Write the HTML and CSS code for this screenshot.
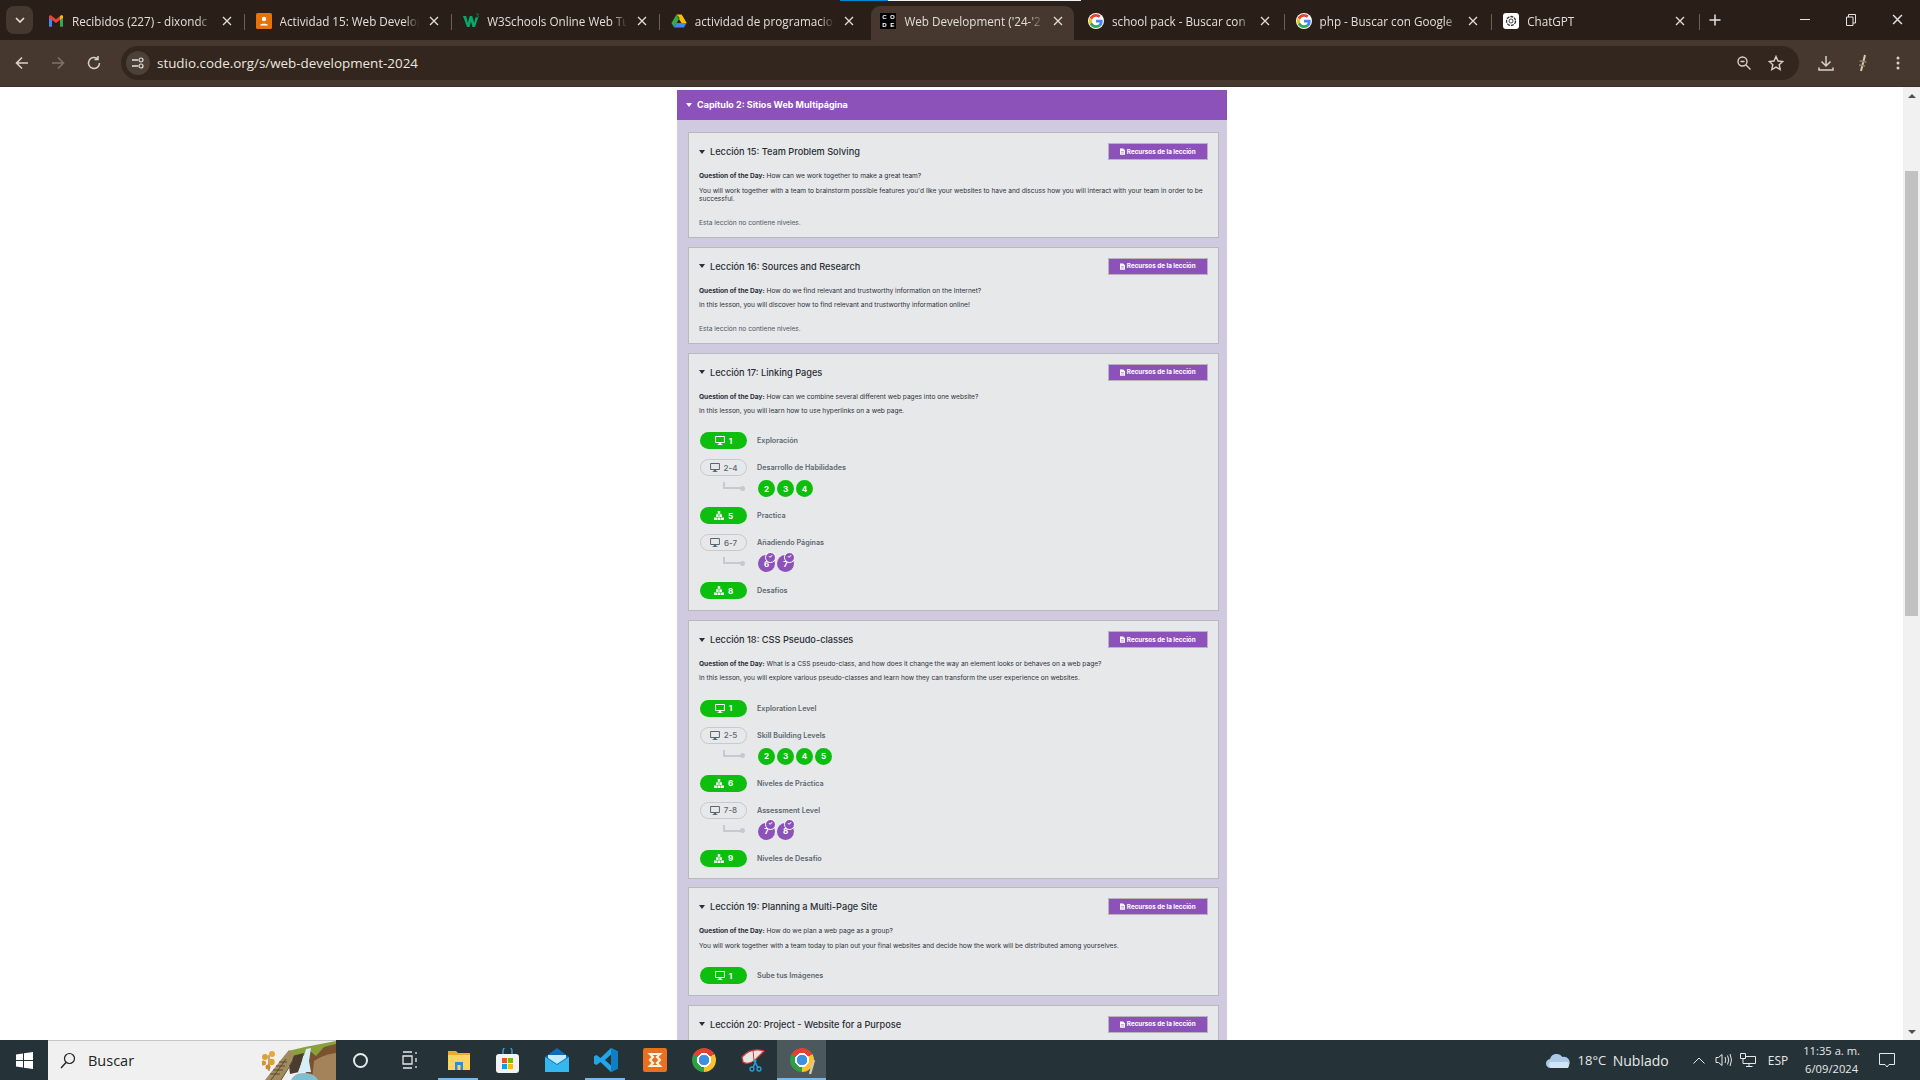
FILE: index.html
```html
<!DOCTYPE html>
<html lang="es">
<head>
    <meta charset="UTF-8">
    <meta name="viewport" content="width=device-width, initial-scale=1.0">
    <title>Web Development ('24-'25)</title>
    <link rel="stylesheet" href="styles.css">
</head>
<body>
    <svg class="sprites" width="0" height="0">
        <symbol id="ic-desktop" viewBox="0 0 12 11"><path d="M0 1a1 1 0 0 1 1-1h10a1 1 0 0 1 1 1v6.500a1 1 0 0 1-1 1H7.500V10H9v1H3v-1h1.500V8.500H1a1 1 0 0 1-1-1zm1.200.2v6h9.600v-6z" fill="currentColor" fill-rule="evenodd"/></symbol>
        <symbol id="ic-blocks" viewBox="0 0 12 11"><path d="M4.500 0h3v3.300h-3zM2.500 4h3v3.300h-3zM6.500 4h3v3.300h-3zM0 8h3.600v3H0zM4.200 8h3.600v3H4.200zM8.400 8H12v3H8.400z" fill="currentColor"/></symbol>
        <symbol id="ic-file" viewBox="0 0 8 10"><path d="M0 0h5l3 3v7H0zM1.500 5v.8h5V5zm0 2v.8h5V7z" fill="currentColor" fill-rule="evenodd"/></symbol>
        <symbol id="ic-x" viewBox="0 0 10 10"><path d="M1 1l8 8M9 1L1 9" stroke="currentColor" stroke-width="1.300" fill="none"/></symbol>
        <symbol id="ic-g" viewBox="0 0 48 48">
            <path fill="#EA4335" d="M24 9.500c3.540 0 6.710 1.220 9.210 3.600l6.850-6.850C35.900 2.380 30.470 0 24 0 14.620 0 6.510 5.380 2.560 13.220l7.980 6.190C12.430 13.720 17.740 9.500 24 9.500z"/>
            <path fill="#4285F4" d="M46.980 24.550c0-1.570-.15-3.090-.38-4.550H24v9.020h12.940c-.58 2.960-2.260 5.480-4.780 7.180l7.730 6c4.510-4.180 7.090-10.360 7.090-17.650z"/>
            <path fill="#FBBC05" d="M10.530 28.590c-.48-1.450-.76-2.990-.76-4.590s.27-3.140.76-4.590l-7.980-6.190C.92 16.460 0 20.120 0 24c0 3.880.92 7.540 2.560 10.780l7.970-6.190z"/>
            <path fill="#34A853" d="M24 48c6.480 0 11.930-2.130 15.890-5.810l-7.730-6c-2.150 1.450-4.920 2.300-8.160 2.300-6.260 0-11.570-4.220-13.470-9.910l-7.980 6.190C6.510 42.620 14.620 48 24 48z"/>
        </symbol>
    </svg>

    <div class="load-line"><span class="load-blue"></span><span class="load-white"></span></div>

    <!-- pestañas -->
    <div class="tabstrip">
        <button class="tab-search"><svg width="10" height="6" viewBox="0 0 10 6"><path d="M1 1l4 4 4-4" stroke="#e8e2dc" stroke-width="1.600" fill="none"/></svg></button>
        <div class="tab">
            <svg class="tab-icon" viewBox="0 0 16 16"><path d="M1 3v10.500h3V7l4 3 4-3v6.500h3V3l-1.500-1L8 6.300 2.500 2z" fill="#ea4335"/><path d="M1 5v8.500h3V7z" fill="#4285f4"/><path d="M15 5v8.500h-3V7z" fill="#34a853"/><path d="M12 3.300V7l3-2.200V3l-1.500-1z" fill="#fbbc05"/></svg>
            <span class="tab-title">Recibidos (227) - dixondc</span>
            <svg class="tab-close"><use href="#ic-x"/></svg>
        </div>
        <div class="tab">
            <svg class="tab-icon" viewBox="0 0 16 16"><rect width="16" height="16" rx="1.500" fill="#e8710a"/><circle cx="8" cy="6" r="2.200" fill="#fff"/><path d="M4 12.500c0-2.500 8-2.500 8 0z" fill="#fff"/></svg>
            <span class="tab-title">Actividad 15: Web Develop</span>
            <svg class="tab-close"><use href="#ic-x"/></svg>
        </div>
        <div class="tab">
            <svg class="tab-icon" viewBox="0 0 16 16"><path d="M0 3h3.200l1.600 7 2-7h2.400l2 7 1.200-5.500h2.800L12 14H9.500L8 8.500 6.500 14H4z" fill="#04aa6d"/><path d="M13 1h2.500v.6l-1 1c.8.200 1 .6 1 1 0 .8-1.600 1-2.500.6" stroke="#04aa6d" stroke-width=".6" fill="none"/></svg>
            <span class="tab-title">W3Schools Online Web Tu</span>
            <svg class="tab-close"><use href="#ic-x"/></svg>
        </div>
        <div class="tab">
            <svg class="tab-icon" viewBox="0 0 16 16"><path d="M5.500 1.500h5L15.500 10l-2.500 0z" fill="#fbbc05"/><path d="M5.500 1.500L.5 10 3 14.500 8 6z" fill="#34a853"/><path d="M5.500 10h10L13 14.500H3z" fill="#4285f4"/><path d="M10.500 1.500L15.500 10h-5L8 6z" fill="#fbbc05"/></svg>
            <span class="tab-title">actividad de programacion</span>
            <svg class="tab-close"><use href="#ic-x"/></svg>
        </div>
        <div class="tab active">
            <span class="tab-icon code-logo"><i>C</i><i>O</i><i>D</i><i>E</i></span>
            <span class="tab-title">Web Development ('24-'2</span>
            <svg class="tab-close"><use href="#ic-x"/></svg>
        </div>
        <div class="tab">
            <span class="tab-icon g-badge"><svg width="14" height="14"><use href="#ic-g"/></svg></span>
            <span class="tab-title">school pack - Buscar con</span>
            <svg class="tab-close"><use href="#ic-x"/></svg>
        </div>
        <div class="tab">
            <span class="tab-icon g-badge"><svg width="14" height="14"><use href="#ic-g"/></svg></span>
            <span class="tab-title">php - Buscar con Google</span>
            <svg class="tab-close"><use href="#ic-x"/></svg>
        </div>
        <div class="tab">
            <span class="tab-icon gpt-badge"><svg width="12" height="12" viewBox="0 0 12 12"><circle cx="6" cy="6" r="4.500" fill="none" stroke="#333" stroke-width="1.300" stroke-dasharray="3 1"/><circle cx="6" cy="6" r="2" fill="none" stroke="#333" stroke-width=".9"/></svg></span>
            <span class="tab-title">ChatGPT</span>
            <svg class="tab-close"><use href="#ic-x"/></svg>
        </div>
        <svg class="new-tab" width="12" height="12" viewBox="0 0 12 12"><path d="M6 .5v11M.5 6h11" stroke="#e8e2dc" stroke-width="1.500"/></svg>
        <div class="win-buttons">
            <svg width="10" height="10" viewBox="0 0 10 10"><path d="M0 5.500h10" stroke="#e8e2dc"/></svg>
            <svg width="10" height="12" viewBox="0 0 10 12"><path d="M.5 3h6.500v8.500H.5zM2.500 3V.5h7V9H7" stroke="#e8e2dc" fill="none"/></svg>
            <svg class="win-close" width="11" height="11"><use href="#ic-x"/></svg>
        </div>
    </div>

    <!-- barra de direcciones -->
    <div class="toolbar">
        <svg class="nav-icon" viewBox="0 0 16 16"><path d="M14 8H2.500M8 2.500L2.500 8 8 13.500" stroke="#d8d1ca" stroke-width="1.600" fill="none"/></svg>
        <svg class="nav-icon" viewBox="0 0 16 16"><path d="M2 8h11.500M8 2.500L13.500 8 8 13.500" stroke="#7d7269" stroke-width="1.600" fill="none"/></svg>
        <svg class="nav-icon" viewBox="0 0 16 16"><path d="M13.500 8A5.500 5.500 0 1 1 11.700 3.900M12 1v3.500H8.500" stroke="#d8d1ca" stroke-width="1.500" fill="none"/></svg>
        <div class="omnibox">
            <span class="site-info"><svg width="14" height="12" viewBox="0 0 14 12"><path d="M1 3h6M1 9h6" stroke="#e8e2dc" stroke-width="1.300"/><circle cx="10" cy="3" r="2" fill="none" stroke="#e8e2dc" stroke-width="1.200"/><circle cx="10" cy="9" r="2" fill="none" stroke="#e8e2dc" stroke-width="1.200"/></svg></span>
            <span class="url">studio.code.org/s/web-development-2024</span>
            <svg class="omni-zoom" width="16" height="16" viewBox="0 0 16 16"><circle cx="6.500" cy="6.500" r="4.500" fill="none" stroke="#d8d1ca" stroke-width="1.400"/><path d="M10 10l4.500 4.500M4.500 6.500h4" stroke="#d8d1ca" stroke-width="1.400"/></svg>
            <svg class="omni-star" width="16" height="16" viewBox="0 0 16 16"><path d="M8 1.500l2 4.500 4.800.5-3.600 3.200 1 4.800L8 12.100l-4.200 2.400 1-4.800L1.200 6.500 6 6z" fill="none" stroke="#d8d1ca" stroke-width="1.400"/></svg>
        </div>
        <svg class="tool-download" width="16" height="16" viewBox="0 0 16 16"><path d="M8 1v9.500M3.500 6.500L8 11l4.500-4.500M1 12.500v2.500h14v-2.500" stroke="#d8d1ca" stroke-width="1.500" fill="none"/></svg>
        <svg class="tool-ext" width="12" height="18" viewBox="0 0 12 18"><path d="M8 1L4 17" stroke="#d8c9a8" stroke-width="2"/><path d="M2.500 7l7 1M2 11l6 1" stroke="#8a7f74" stroke-width="1.300"/></svg>
        <svg class="tool-menu" width="4" height="14" viewBox="0 0 4 14"><circle cx="2" cy="2" r="1.500" fill="#d8d1ca"/><circle cx="2" cy="7" r="1.500" fill="#d8d1ca"/><circle cx="2" cy="12" r="1.500" fill="#d8d1ca"/></svg>
    </div>

    <!-- contenido -->
    <div class="viewport">
        <div class="page">
            <div class="chapter">
                <div class="chapter-head"><i class="caret"></i>Capítulo 2: Sitios Web Multipágina</div>
                <div class="chapter-body">

                    <div class="lesson">
                        <div class="lesson-head">
                            <h2><i class="caret dark"></i>Lección 15: Team Problem Solving</h2>
                            <a class="res-btn" href="#"><svg width="5" height="7"><use href="#ic-file"/></svg>Recursos de la lección</a>
                        </div>
                        <p class="lesson-text"><b>Question of the Day:</b> How can we work together to make a great team?</p>
                        <p class="lesson-text">You will work together with a team to brainstorm possible features you'd like your websites to have and discuss how you will interact with your team in order to be successful.</p>
                        <p class="no-levels">Esta lección no contiene niveles.</p>
                    </div>

                    <div class="lesson">
                        <div class="lesson-head">
                            <h2><i class="caret dark"></i>Lección 16: Sources and Research</h2>
                            <a class="res-btn" href="#"><svg width="5" height="7"><use href="#ic-file"/></svg>Recursos de la lección</a>
                        </div>
                        <p class="lesson-text"><b>Question of the Day:</b> How do we find relevant and trustworthy information on the Internet?</p>
                        <p class="lesson-text">In this lesson, you will discover how to find relevant and trustworthy information online!</p>
                        <p class="no-levels">Esta lección no contiene niveles.</p>
                    </div>

                    <div class="lesson">
                        <div class="lesson-head">
                            <h2><i class="caret dark"></i>Lección 17: Linking Pages</h2>
                            <a class="res-btn" href="#"><svg width="5" height="7"><use href="#ic-file"/></svg>Recursos de la lección</a>
                        </div>
                        <p class="lesson-text"><b>Question of the Day:</b> How can we combine several different web pages into one website?</p>
                        <p class="lesson-text">In this lesson, you will learn how to use hyperlinks on a web page.</p>
                        <div class="levels">
                            <div class="level-row"><span class="pill"><svg><use href="#ic-desktop"/></svg>1</span><span class="level-label">Exploración</span></div>
                            <div class="level-row"><span class="pill outline"><svg><use href="#ic-desktop"/></svg>2-4</span><span class="level-label">Desarrollo de Habilidades</span></div>
                            <div class="bubble-row"><i class="connector"></i><span class="bubble">2</span><span class="bubble">3</span><span class="bubble">4</span></div>
                            <div class="level-row"><span class="pill"><svg><use href="#ic-blocks"/></svg>5</span><span class="level-label">Practica</span></div>
                            <div class="level-row"><span class="pill outline"><svg><use href="#ic-desktop"/></svg>6-7</span><span class="level-label">Añadiendo Páginas</span></div>
                            <div class="bubble-row"><i class="connector"></i><span class="bubble quiz">6</span><span class="bubble quiz">7</span></div>
                            <div class="level-row"><span class="pill"><svg><use href="#ic-blocks"/></svg>8</span><span class="level-label">Desafíos</span></div>
                        </div>
                    </div>

                    <div class="lesson">
                        <div class="lesson-head">
                            <h2><i class="caret dark"></i>Lección 18: CSS Pseudo-classes</h2>
                            <a class="res-btn" href="#"><svg width="5" height="7"><use href="#ic-file"/></svg>Recursos de la lección</a>
                        </div>
                        <p class="lesson-text"><b>Question of the Day:</b> What is a CSS pseudo-class, and how does it change the way an element looks or behaves on a web page?</p>
                        <p class="lesson-text">In this lesson, you will explore various pseudo-classes and learn how they can transform the user experience on websites.</p>
                        <div class="levels">
                            <div class="level-row"><span class="pill"><svg><use href="#ic-desktop"/></svg>1</span><span class="level-label">Exploration Level</span></div>
                            <div class="level-row"><span class="pill outline"><svg><use href="#ic-desktop"/></svg>2-5</span><span class="level-label">Skill Building Levels</span></div>
                            <div class="bubble-row"><i class="connector"></i><span class="bubble">2</span><span class="bubble">3</span><span class="bubble">4</span><span class="bubble">5</span></div>
                            <div class="level-row"><span class="pill"><svg><use href="#ic-blocks"/></svg>6</span><span class="level-label">Niveles de Práctica</span></div>
                            <div class="level-row"><span class="pill outline"><svg><use href="#ic-desktop"/></svg>7-8</span><span class="level-label">Assessment Level</span></div>
                            <div class="bubble-row"><i class="connector"></i><span class="bubble quiz">7</span><span class="bubble quiz">8</span></div>
                            <div class="level-row"><span class="pill"><svg><use href="#ic-blocks"/></svg>9</span><span class="level-label">Niveles de Desafío</span></div>
                        </div>
                    </div>

                    <div class="lesson">
                        <div class="lesson-head">
                            <h2><i class="caret dark"></i>Lección 19: Planning a Multi-Page Site</h2>
                            <a class="res-btn" href="#"><svg width="5" height="7"><use href="#ic-file"/></svg>Recursos de la lección</a>
                        </div>
                        <p class="lesson-text"><b>Question of the Day:</b> How do we plan a web page as a group?</p>
                        <p class="lesson-text">You will work together with a team today to plan out your final websites and decide how the work will be distributed among yourselves.</p>
                        <div class="levels">
                            <div class="level-row"><span class="pill"><svg><use href="#ic-desktop"/></svg>1</span><span class="level-label">Sube tus Imágenes</span></div>
                        </div>
                    </div>

                    <div class="lesson last">
                        <div class="lesson-head">
                            <h2><i class="caret dark"></i>Lección 20: Project - Website for a Purpose</h2>
                            <a class="res-btn" href="#"><svg width="5" height="7"><use href="#ic-file"/></svg>Recursos de la lección</a>
                        </div>
                    </div>

                </div>
            </div>
        </div>
        <div class="scrollbar">
            <i class="scroll-up"></i>
            <div class="scroll-track"><div class="scroll-thumb"></div></div>
            <i class="scroll-down"></i>
        </div>
    </div>

    <!-- barra de tareas -->
    <div class="taskbar">
        <span class="start"><svg width="17" height="17" viewBox="0 0 17 17"><path d="M0 2.400L7 1.400V8H0zM8 1.200L17 0v8H8zM0 9h7v6.600L0 14.600zM8 9h9v8L8 15.800z" fill="#fff"/></svg></span>
        <div class="search-box">
            <svg width="16" height="17" viewBox="0 0 16 17"><circle cx="9.500" cy="6.500" r="5" fill="none" stroke="#222" stroke-width="1.200"/><path d="M6 10.500L1 16" stroke="#222" stroke-width="1.400"/></svg>
            <span class="search-text">Buscar</span>
            <svg class="search-art" width="74" height="39" viewBox="0 0 74 39">
                <path d="M43 7L74 1V39H44z" fill="#7a5230"/>
                <path d="M52 20Q60 14 74 12V39H50z" fill="#a5835a"/>
                <path d="M26 10L43 6 74 0V3L62 6 54 15 48 10 40 16 30 18z" fill="#8aa03c"/>
                <path d="M26 16L42 12 37 31 28 33z" fill="#4a3c2e"/>
                <path d="M44 8L49 7 47 20 49 31H36L41 18z" fill="#d6eef5"/>
                <path d="M29 39Q33 31 43 32 52 32 56 39z" fill="#7fbfd0"/>
                <path d="M3 39L22 15 27 9 32 14 30 20 19 39z" fill="#a08a5e"/>
                <path d="M9 39L24 18 M19 39L31 20 M8 33h10M11 29h10M14 25h9M17 21h8" stroke="#5c4a30" stroke-width="1" fill="none"/>
                <path d="M7 14V30" stroke="#8a5a20" stroke-width="1"/>
                <circle cx="3" cy="16" r="3" fill="#e0a030"/>
                <circle cx="10" cy="13" r="3" fill="#e8a838"/>
                <circle cx="1.500" cy="22" r="2.500" fill="#d8942c"/>
                <circle cx="9.500" cy="21" r="3.200" fill="#e0a030"/>
                <circle cx="6" cy="26" r="2.500" fill="#c88a2a"/>
            </svg>
        </div>
        <span class="task-item"><i class="cortana"></i></span>
        <span class="task-item"><svg width="16" height="18" viewBox="0 0 16 18"><path d="M1 1h9M1 17h9M1 5h9v8H1zM14 1v2M14 7v4M14 15v2" stroke="#e6e9ea" stroke-width="1.300" fill="none"/></svg></span>
        <span class="task-item running"><svg width="22" height="20" viewBox="0 0 22 20"><path d="M0 1h8l2 2h12v5H0z" fill="#f0a92e"/><path d="M0 5h22v15H0z" fill="#fcd462"/><path d="M7 12h8v8H7z" fill="#2a8fd6"/><path d="M9.500 15h3v5h-3z" fill="#fcd462"/></svg></span>
        <span class="task-item"><svg width="23" height="25" viewBox="0 0 23 25"><path d="M7 7V3a4 4 0 0 1 9 0v4" fill="none" stroke="#2aa0e0" stroke-width="1.500"/><rect y="6" width="23" height="19" rx="3" fill="#f3f3f3"/><path d="M6 10h5v5H6z" fill="#f25022"/><path d="M12 10h5v5h-5z" fill="#7fba00"/><path d="M6 16h5v5H6z" fill="#00a4ef"/><path d="M12 16h5v5h-5z" fill="#ffb900"/></svg></span>
        <span class="task-item"><svg width="24" height="24" viewBox="0 0 24 24"><path d="M0 9L12 0l12 9v15H0z" fill="#0f6cbd"/><path d="M0 9l12 8 12-8v15H0z" fill="#35b8f0"/><path d="M3 7h18v3l-9 6-9-6z" fill="#c5ecfb"/></svg></span>
        <span class="task-item running"><svg width="24" height="24" viewBox="0 0 24 24"><path d="M17 0l7 3.400v17.200L17 24 6.500 14l-4 3L0 15.800v-7.600L2.500 7l4 3z" fill="#23a6e8"/><path d="M17 6.500L11 12l6 5.500z" fill="#253237"/><path d="M17 0l7 3.400v17.200L17 24z" fill="#0f7fc4"/></svg></span>
        <span class="task-item"><svg width="24" height="24" viewBox="0 0 24 24"><rect width="24" height="24" rx="2" fill="#e8701f"/><path d="M7 6h10l-3 3 3 3-3 3 3 3H7l3-3-3-3 3-3z" fill="none" stroke="#fff3e3" stroke-width="2.200"/></svg></span>
        <span class="task-item"><i class="chrome-ic"></i></span>
        <span class="task-item"><svg width="24" height="24" viewBox="0 0 24 24"><path d="M1 9Q10-1 23 3L13 13Q6 17 2 14z" fill="#e6e6e6" stroke="#d43a3a" stroke-width="1.300"/><path d="M12 2l1 11" stroke="#d43a3a" stroke-width="1"/><path d="M13 12l4 8M15 12l-3 8" stroke="#2a9fd6" stroke-width="1.600"/><circle cx="18" cy="21" r="2" fill="none" stroke="#2a9fd6" stroke-width="1.300"/><circle cx="11" cy="21" r="2" fill="none" stroke="#2a9fd6" stroke-width="1.300"/></svg></span>
        <span class="task-item running active"><i class="chrome-ic"></i><svg class="chrome-pen" width="8" height="14" viewBox="0 0 8 14"><path d="M6 0L2 14" stroke="#d8c9a8" stroke-width="2.400"/></svg></span>

        <div class="tray">
            <svg class="tray-cloud" width="24" height="15" viewBox="0 0 24 15"><path d="M5 15a4.500 4.500 0 0 1-1-9A7 7 0 0 1 16.500 4 5.500 5.500 0 0 1 19.500 15z" fill="#a9c9e8"/><path d="M5 15a4.500 4.500 0 0 1-1-6h18q2 3 0 6z" fill="#d3e4f3"/></svg>
            <span class="tray-temp">18°C</span>
            <span class="tray-cond">Nublado</span>
            <svg class="tray-up" width="12" height="7" viewBox="0 0 12 7"><path d="M.5 6.500L6 1l5.500 5.500" stroke="#e6e9ea" fill="none"/></svg>
            <svg class="tray-vol" width="17" height="14" viewBox="0 0 17 14"><path d="M1 4.500h2.500L7 1.500v11l-3.500-3H1zM10 4q1.500 3 0 6M12.500 2.500q2.500 4.500 0 9M15 1q3 6 0 12" stroke="#e6e9ea" fill="none"/></svg>
            <svg class="tray-net" width="16" height="14" viewBox="0 0 16 14"><path d="M3 3.500H15.500v7H3zM9 10.500V13M6 13.500h6.500" stroke="#e6e9ea" fill="none"/><path d="M.5.500h5v5h-5z" fill="#253237" stroke="#e6e9ea"/></svg>
            <span class="tray-lang">ESP</span>
            <div class="clock"><span>11:35 a. m.</span><span>6/09/2024</span></div>
            <svg class="tray-note" width="16" height="15" viewBox="0 0 16 15"><path d="M.5.500h15v11H10l-2 2.500-2-2.500H.5z" stroke="#e6e9ea" fill="none"/></svg>
        </div>
    </div>
</body>
</html>
```

FILE: styles.css
```css
* {
    box-sizing: border-box;
}

body {
    margin: 0;
    height: 100vh;
    overflow: hidden;
    display: flex;
    flex-direction: column;
    position: relative;
    font-family: Inter, "Liberation Sans", sans-serif;
    background-color: #fff;
}

.sprites {
    position: absolute;
}

.load-line {
    position: absolute;
    top: 0;
    left: 840px;
    display: flex;
    height: 1px;
}

.load-blue {
    width: 48px;
    background-color: #0a84d8;
}

.load-white {
    width: 193px;
    background-color: #f2f2f2;
}

/* pestañas */
.tabstrip {
    height: 40px;
    flex: none;
    display: flex;
    padding: 6px 0 0 6px;
    background-color: #2a1f18;
    color: #e3ddd7;
    font-family: "Open Sans", sans-serif;
    font-size: 11.7px;
}

.tab-search {
    width: 27px;
    height: 28px;
    margin-right: 4px;
    padding: 0;
    border: none;
    border-radius: 8px;
    background-color: #44382f;
    display: flex;
    align-items: center;
    justify-content: center;
}

.tab {
    width: 207.6px;
    height: 34px;
    padding: 0 11px;
    display: flex;
    align-items: center;
    position: relative;
}

.tab::after {
    content: "";
    position: absolute;
    right: 0;
    top: 8px;
    height: 16px;
    width: 1px;
    background-color: #6d6259;
}

.tab:nth-child(5)::after,
.tab.active::after {
    display: none;
}

.tab.active {
    background-color: #46382f;
    border-radius: 9px 9px 0 0;
    margin: 0 2.6px 0 4px;
    width: 203px;
    padding: 0 9px;
}

.tab-icon {
    width: 16px;
    height: 16px;
    flex: none;
    margin: -4px 8px 0 0;
}

.tab-title {
    flex: 1;
    min-width: 0;
    margin-top: -4px;
    overflow: hidden;
    white-space: nowrap;
    -webkit-mask-image: linear-gradient(90deg, #000 86%, transparent 96%);
    mask-image: linear-gradient(90deg, #000 86%, transparent 96%);
}

.tab-close {
    width: 10px;
    height: 10px;
    flex: none;
    margin: -4px 2px 0 4px;
    color: #e3ddd7;
}

.tab.active ~ .tab .tab-close {
    margin-right: 3.5px;
    margin-left: 2.5px;
}

.code-logo {
    background-color: #000;
    display: grid;
    grid-template-columns: 1fr 1fr;
    gap: 2px;
    padding: 1px;
}

.code-logo i {
    color: #fff;
    font: 700 6px/6px "Liberation Sans", sans-serif;
    text-align: center;
}

.g-badge,
.gpt-badge {
    background-color: #fff;
    border-radius: 3px;
    display: flex;
    align-items: center;
    justify-content: center;
}

.g-badge {
    border-radius: 50%;
}

.new-tab {
    margin: 8px 0 0 9px;
}

.win-buttons {
    margin-left: 79px;
    display: flex;
    align-items: flex-start;
    gap: 36px;
    padding-top: 8px;
    color: #e8e2dc;
}

/* barra de direcciones */
.toolbar {
    height: 47px;
    flex: none;
    display: flex;
    align-items: center;
    padding: 0 0 1px 14px;
    background-color: #46382f;
    border-bottom: 1px solid #3a2e26;
}

.nav-icon {
    width: 16px;
    height: 16px;
    margin-right: 20px;
}

.omnibox {
    width: 1678px;
    height: 34px;
    margin-left: -1px;
    padding: 0 15px 0 5px;
    display: flex;
    align-items: center;
    background-color: #32261f;
    border-radius: 17px;
}

.site-info {
    width: 24px;
    height: 24px;
    border-radius: 50%;
    background-color: #4c4037;
    display: flex;
    align-items: center;
    justify-content: center;
}

.url {
    flex: 1;
    margin-left: 7px;
    color: #ece6df;
    font-family: "Open Sans", sans-serif;
    font-size: 13.4px;
}

.omni-star {
    margin-left: 16px;
}

.tool-download {
    margin-left: 19px;
}

.tool-ext {
    margin-left: 23px;
}

.tool-menu {
    margin-left: 27px;
}

/* contenido */
.viewport {
    flex: 1;
    min-height: 0;
    display: flex;
    overflow: hidden;
}

.page {
    flex: 1;
    min-width: 0;
    padding: 3px 0 0 1px;
}

.chapter {
    width: 550px;
    margin: 0 auto;
    background-color: #cfcadf;
}

.chapter-head {
    height: 30px;
    padding: 0 0 1px 9px;
    display: flex;
    align-items: center;
    background-color: #8c52ba;
    color: #fff;
    font-size: 9px;
    font-weight: 700;
}

.caret {
    width: 0;
    height: 0;
    margin-right: 5px;
    border-style: solid;
    border-width: 4px 3px 0;
    border-color: #fff transparent transparent;
    display: inline-block;
}

.caret.dark {
    border-top-color: #292f36;
}

.chapter-body {
    padding: 12.3px 8px 1px 11px;
    display: flex;
    flex-direction: column;
    gap: 8.6px;
}

.lesson {
    padding: 10px 10px 9px;
    background-color: #e7e8ea;
    border: 1px solid #b9b9bd;
    color: #292f36;
}

.lesson.last {
    height: 60px;
}

.lesson-head {
    height: 17px;
    margin-bottom: 12px;
    display: flex;
    align-items: center;
    justify-content: space-between;
}

.lesson-head h2 {
    margin: 0;
    font-size: 9.2px;
    font-weight: 500;
    display: flex;
    align-items: center;
}

.res-btn {
    width: 100.5px;
    height: 17px;
    display: flex;
    align-items: center;
    justify-content: center;
    gap: 2px;
    background-color: #8c52ba;
    border: 1px solid #b5b5bb;
    color: #fff;
    font-size: 6.3px;
    font-weight: 700;
    text-decoration: none;
}

.lesson-text {
    margin: 0 0 5.5px;
    font-size: 6.6px;
    line-height: 8.8px;
}

.lesson-text b {
    font-weight: 700;
}

.no-levels {
    margin: 15.3px 0 0;
    font-size: 6.6px;
    line-height: 8.8px;
    color: #4d575f;
}

.levels {
    margin-left: 1px;
    padding-top: 11.2px;
    padding-bottom: 2px;
}

.level-row {
    height: 17px;
    margin-bottom: 10px;
    display: flex;
    align-items: center;
}

.level-row:last-child {
    margin-bottom: 0;
}

.pill {
    width: 47px;
    height: 17px;
    display: flex;
    align-items: center;
    justify-content: center;
    gap: 4px;
    border-radius: 9px;
    background-color: #0ebe0e;
    color: #fff;
    font-size: 8px;
    font-weight: 700;
}

.pill svg {
    width: 10px;
    height: 9px;
}

.pill.outline {
    background-color: transparent;
    border: 1px solid #c6cacd;
    color: #5b6770;
    font-weight: 500;
}

.level-label {
    margin-left: 10px;
    color: #5b6770;
    font-size: 7.2px;
    font-weight: 600;
}

.bubble-row {
    height: 17px;
    margin: -6px 0 10px;
    padding-left: 23px;
    display: flex;
    gap: 2px;
}

.connector {
    width: 20px;
    height: 7px;
    margin: 2px 13px 0 0;
    position: relative;
    border-left: 2px solid #c6cacd;
    border-bottom: 2px solid #c6cacd;
}

.connector::after {
    content: "";
    position: absolute;
    right: -2px;
    bottom: -3.5px;
    width: 5px;
    height: 5px;
    border-radius: 50%;
    background-color: #c6cacd;
}

.bubble {
    width: 17px;
    height: 17px;
    position: relative;
    display: flex;
    align-items: center;
    justify-content: center;
    border-radius: 50%;
    background-color: #0ebe0e;
    color: #fff;
    font-size: 8px;
    font-weight: 700;
}

.bubble.quiz {
    background-color: #8c52ba;
}

.bubble.quiz::after {
    content: "✓";
    position: absolute;
    top: -3.5px;
    right: -1px;
    width: 9px;
    height: 9px;
    border: 1px solid #fff;
    border-radius: 50%;
    background-color: #8c52ba;
    font-size: 5px;
    line-height: 7px;
    text-align: center;
}

/* barra de desplazamiento */
.scrollbar {
    width: 17px;
    flex: none;
    display: flex;
    flex-direction: column;
    background-color: #f1f1f1;
}

.scroll-up,
.scroll-down {
    height: 17px;
    flex: none;
    display: flex;
    align-items: center;
    justify-content: center;
}

.scroll-up::before,
.scroll-down::before {
    content: "";
    border-style: solid;
    border-width: 0 4px 4px;
    border-color: transparent transparent #505050;
}

.scroll-down::before {
    border-width: 4px 4px 0;
    border-color: #505050 transparent transparent;
}

.scroll-track {
    flex: 1;
    padding: 67px 2px 0;
}

.scroll-thumb {
    height: 445px;
    background-color: #c1c1c1;
}

/* barra de tareas */
.taskbar {
    height: 40px;
    flex: none;
    display: flex;
    align-items: center;
    background-color: #253237;
    color: #e6e9ea;
    font-family: "Open Sans", sans-serif;
}

.start {
    width: 48px;
    height: 40px;
    display: flex;
    align-items: center;
    justify-content: center;
}

.search-box {
    width: 288px;
    height: 40px;
    padding-left: 12px;
    display: flex;
    align-items: center;
    position: relative;
    background-color: #f0f0f0;
    border-top: 1px solid #c4c6c7;
    color: #222;
    font-size: 14.5px;
}

.search-text {
    margin-left: 12px;
}

.search-art {
    position: absolute;
    right: 0;
    bottom: 0;
}

.task-item {
    width: 49px;
    height: 40px;
    flex: none;
    display: flex;
    align-items: center;
    justify-content: center;
    position: relative;
}

.task-item.running::after {
    content: "";
    position: absolute;
    bottom: 0;
    left: 4px;
    right: 5px;
    height: 2px;
    background-color: #76b9ed;
}

.task-item.active {
    background-color: #4d585d;
}

.task-item.active::after {
    left: 0;
    right: 0;
}

.cortana {
    width: 15px;
    height: 15px;
    border: 2px solid #e6e9ea;
    border-radius: 50%;
}

.chrome-ic {
    width: 24px;
    height: 24px;
    border-radius: 50%;
    background:
        radial-gradient(circle, #3d8fe0 0 30%, #fff 31% 41%, transparent 42%),
        conic-gradient(from 60deg, #fbc02d 0 120deg, #2f9e44 120deg 240deg, #e34133 240deg 360deg);
}

.chrome-pen {
    position: absolute;
    right: 10px;
    bottom: 6px;
}

.tray {
    margin-left: auto;
    display: flex;
    align-items: center;
    padding-right: 25px;
}

.tray-temp {
    margin-left: 8px;
    font-size: 13px;
}

.tray-cond {
    margin-left: 6.6px;
    font-size: 14px;
}

.tray-up {
    margin-left: 24px;
}

.tray-vol {
    margin-left: 10px;
}

.tray-net {
    margin-left: 8px;
}

.tray-lang {
    margin-left: 12px;
    font-size: 12px;
}

.clock {
    margin-left: 15px;
    display: flex;
    flex-direction: column;
    align-items: center;
    font-size: 11.2px;
    line-height: 18px;
}

.tray-note {
    margin-left: 19px;
}
```
